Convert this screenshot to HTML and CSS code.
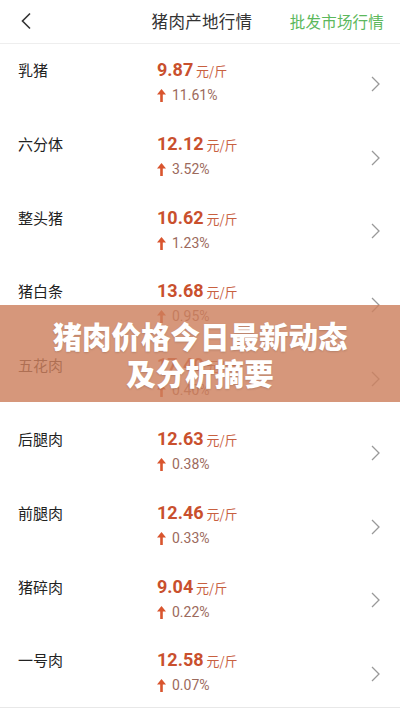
FILE: index.html
```html
<!DOCTYPE html>
<html lang="zh">
<head>
<meta charset="utf-8">
<link rel="stylesheet" href="styles.css">
</head>
<body>
<div class="page">
  <header class="topbar">
    <svg class="back" width="12" height="18" viewBox="0 0 12 18"><path d="M10 1.5 L2.5 9 L10 16.5" fill="none" stroke="#333" stroke-width="1.6"/></svg>
    <div class="title">猪肉产地行情</div>
    <div class="link">批发市场行情</div>
  </header>
  <ul class="list">
    <li class="row"><span class="name">乳猪</span><div class="price"><div class="val"><b>9.87</b> 元/斤</div><div class="chg"><svg class="up" width="9" height="13" viewBox="0 0 9 13"><path d="M4.5 0 L9 5.5 L5.8 5.5 L5.8 13 L3.2 13 L3.2 5.5 L0 5.5 Z" fill="#d9552e"/></svg>11.61%</div></div><svg class="chev" width="9" height="16" viewBox="0 0 9 16"><path d="M1 1 L8 8 L1 15" fill="none" stroke="#999" stroke-width="1.3"/></svg></li>
    <li class="row"><span class="name">六分体</span><div class="price"><div class="val"><b>12.12</b> 元/斤</div><div class="chg"><svg class="up" width="9" height="13" viewBox="0 0 9 13"><path d="M4.5 0 L9 5.5 L5.8 5.5 L5.8 13 L3.2 13 L3.2 5.5 L0 5.5 Z" fill="#d9552e"/></svg>3.52%</div></div><svg class="chev" width="9" height="16" viewBox="0 0 9 16"><path d="M1 1 L8 8 L1 15" fill="none" stroke="#999" stroke-width="1.3"/></svg></li>
    <li class="row"><span class="name">整头猪</span><div class="price"><div class="val"><b>10.62</b> 元/斤</div><div class="chg"><svg class="up" width="9" height="13" viewBox="0 0 9 13"><path d="M4.5 0 L9 5.5 L5.8 5.5 L5.8 13 L3.2 13 L3.2 5.5 L0 5.5 Z" fill="#d9552e"/></svg>1.23%</div></div><svg class="chev" width="9" height="16" viewBox="0 0 9 16"><path d="M1 1 L8 8 L1 15" fill="none" stroke="#999" stroke-width="1.3"/></svg></li>
    <li class="row"><span class="name">猪白条</span><div class="price"><div class="val"><b>13.68</b> 元/斤</div><div class="chg"><svg class="up" width="9" height="13" viewBox="0 0 9 13"><path d="M4.5 0 L9 5.5 L5.8 5.5 L5.8 13 L3.2 13 L3.2 5.5 L0 5.5 Z" fill="#d9552e"/></svg>0.95%</div></div><svg class="chev" width="9" height="16" viewBox="0 0 9 16"><path d="M1 1 L8 8 L1 15" fill="none" stroke="#999" stroke-width="1.3"/></svg></li>
    <li class="row"><span class="name">五花肉</span><div class="price"><div class="val"><b>17.40</b> 元/斤</div><div class="chg"><svg class="up" width="9" height="13" viewBox="0 0 9 13"><path d="M4.5 0 L9 5.5 L5.8 5.5 L5.8 13 L3.2 13 L3.2 5.5 L0 5.5 Z" fill="#d9552e"/></svg>0.40%</div></div><svg class="chev" width="9" height="16" viewBox="0 0 9 16"><path d="M1 1 L8 8 L1 15" fill="none" stroke="#999" stroke-width="1.3"/></svg></li>
    <li class="row"><span class="name">后腿肉</span><div class="price"><div class="val"><b>12.63</b> 元/斤</div><div class="chg"><svg class="up" width="9" height="13" viewBox="0 0 9 13"><path d="M4.5 0 L9 5.5 L5.8 5.5 L5.8 13 L3.2 13 L3.2 5.5 L0 5.5 Z" fill="#d9552e"/></svg>0.38%</div></div><svg class="chev" width="9" height="16" viewBox="0 0 9 16"><path d="M1 1 L8 8 L1 15" fill="none" stroke="#999" stroke-width="1.3"/></svg></li>
    <li class="row"><span class="name">前腿肉</span><div class="price"><div class="val"><b>12.46</b> 元/斤</div><div class="chg"><svg class="up" width="9" height="13" viewBox="0 0 9 13"><path d="M4.5 0 L9 5.5 L5.8 5.5 L5.8 13 L3.2 13 L3.2 5.5 L0 5.5 Z" fill="#d9552e"/></svg>0.33%</div></div><svg class="chev" width="9" height="16" viewBox="0 0 9 16"><path d="M1 1 L8 8 L1 15" fill="none" stroke="#999" stroke-width="1.3"/></svg></li>
    <li class="row"><span class="name">猪碎肉</span><div class="price"><div class="val"><b>9.04</b> 元/斤</div><div class="chg"><svg class="up" width="9" height="13" viewBox="0 0 9 13"><path d="M4.5 0 L9 5.5 L5.8 5.5 L5.8 13 L3.2 13 L3.2 5.5 L0 5.5 Z" fill="#d9552e"/></svg>0.22%</div></div><svg class="chev" width="9" height="16" viewBox="0 0 9 16"><path d="M1 1 L8 8 L1 15" fill="none" stroke="#999" stroke-width="1.3"/></svg></li>
    <li class="row"><span class="name">一号肉</span><div class="price"><div class="val"><b>12.58</b> 元/斤</div><div class="chg"><svg class="up" width="9" height="13" viewBox="0 0 9 13"><path d="M4.5 0 L9 5.5 L5.8 5.5 L5.8 13 L3.2 13 L3.2 5.5 L0 5.5 Z" fill="#d9552e"/></svg>0.07%</div></div><svg class="chev" width="9" height="16" viewBox="0 0 9 16"><path d="M1 1 L8 8 L1 15" fill="none" stroke="#999" stroke-width="1.3"/></svg></li>
  </ul>
  <div class="banner"><h1>猪肉价格今日最新动态<br>及分析摘要</h1></div>
</div>
</body>
</html>
```

FILE: styles.css
```css
* { box-sizing: border-box; }
html, body { margin: 0; padding: 0; background: #fff; }
body { font-family: "Noto Sans CJK SC", "Noto Sans", sans-serif; color: #222; }
.page { position: relative; width: 400px; height: 708px; overflow: hidden; background: #fff; }
.topbar {
  height: 44px;
  border-bottom: 1px solid #eeeeee;
  display: grid;
  grid-template-columns: 1fr auto 1fr;
  align-items: center;
  padding: 0 16px 0 20px;
}
.back { display: block; margin-top: -2px; }
.title { font-size: 16.5px; color: #333; letter-spacing: 0.3px; margin-top: -2px; }
.link { justify-self: end; font-size: 15.5px; color: #5cb85c; letter-spacing: 0.2px; margin-top: -2px; }
.list { list-style: none; margin: 0; padding: 0; }
.row {
  height: 73.8px;
  display: grid;
  grid-template-columns: 139px 1fr auto;
  align-items: start;
  padding: 15px 20px 0 18px;
}
.row:last-child { border-bottom: 1px solid #e8e8e8; }
.name { font-size: 15px; line-height: 22px; color: #222; }
.price { display: flex; flex-direction: column; gap: 4px; }
.val { font-size: 13px; line-height: 22px; color: #c8603f; font-family: "Noto Sans CJK SC", sans-serif; }
.val b { font-family: Roboto, "Noto Sans", sans-serif; font-weight: 700; font-size: 18px; color: #c9502d; }
.chg { display: flex; align-items: center; gap: 6px; font-family: Roboto, "Noto Sans", sans-serif; font-size: 14px; line-height: 19px; color: #9c6a5c; }
.up { display: block; }
.chev { align-self: center; margin-top: -9px; }
.banner {
  position: absolute;
  left: 0; top: 305px;
  width: 400px; height: 97px;
  background: rgba(205, 128, 94, 0.82);
  display: flex; align-items: center; justify-content: center;
}
.banner h1 {
  margin: 0;
  font-size: 29.5px;
  line-height: 37px;
  font-weight: 900;
  color: #fff;
  text-align: center;
  text-shadow: 0 1px 2px rgba(0,0,0,0.15);
}
```
